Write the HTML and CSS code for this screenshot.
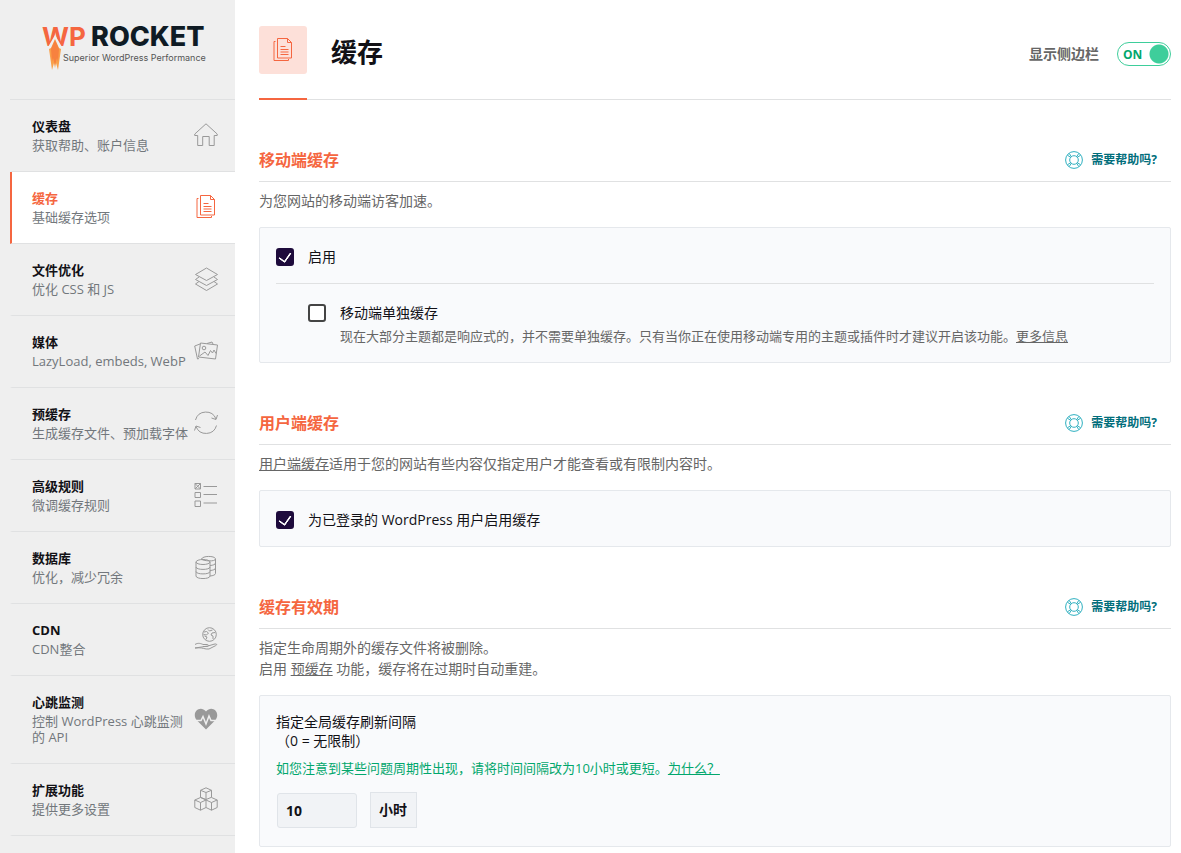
FILE: index.html
```html
<!DOCTYPE html>
<html lang="zh-CN">
<head>
<meta charset="utf-8">
<meta name="viewport" content="width=device-width, initial-scale=1">
<title>WP Rocket</title>
<link rel="stylesheet" href="styles.css">
</head>
<body>
<svg class="sprite" aria-hidden="true">
  <symbol id="docs" viewBox="0 0 24 24">
    <path d="M6.500 .5h10l4 4v15.500h-14zM16.500 .5v4h4M4.500 3.500h-1.500v19h14.500v-1.500M9.500 8.500h5M9.500 11.500h8M9.500 14h8M9.500 16.500h8"/>
  </symbol>
  <symbol id="ring" viewBox="0 0 18 18">
    <circle cx="9" cy="9" r="8.400"/><circle cx="9" cy="9" r="4.300"/>
    <path d="M2.500 4.300l3.200 2M4.300 2.500l2 3.200M15.500 4.300l-3.200 2M13.700 2.500l-2 3.200M2.500 13.700l3.200-2M4.300 15.500l2-3.200M15.500 13.700l-3.200-2M13.700 15.500l-2-3.200"/>
  </symbol>
</svg>
<div class="app">
  <aside class="sidebar">
    <svg class="logo" viewBox="0 0 184 60" role="img" aria-label="WP Rocket">
      <text class="logo-wp" x="10" y="34">WP</text>
      <text class="logo-name" x="59" y="34">ROCKET</text>
      <path class="flame-gap" d="M16 35l7-12 7 12v2H16z"/>
      <path class="flame" d="M17 37l2-1 4-9 4 9 2 1-3 21-2-7-1 5-1-5-2 7z"/>
      <path class="flame-core" d="M19 37l4-9 4 9-1 13-1-4-2 7-2-7-1 4z"/>
      <text class="logo-tag" x="31" y="49">Superior WordPress Performance</text>
    </svg>
    <nav class="nav">
      <a class="nav-item" href="#dashboard"><span class="nav-text"><span class="nav-title">仪表盘</span><span class="nav-sub">获取帮助、账户信息</span></span>
        <svg class="icon" viewBox="0 0 24 24"><path d="M.8 11L12 .8 23.200 11v1.500h-3V22.500h-5v-9h-6.500v9h-5v-10h-3z"/></svg></a>
      <a class="nav-item active" href="#cache" aria-current="page"><span class="nav-text"><span class="nav-title">缓存</span><span class="nav-sub">基础缓存选项</span></span>
        <svg class="icon"><use href="#docs"/></svg></a>
      <a class="nav-item" href="#files"><span class="nav-text"><span class="nav-title">文件优化</span><span class="nav-sub">优化 CSS 和 JS</span></span>
        <svg class="icon" viewBox="0 0 24 24"><path d="M12.500 1l11 6.500-11 6-11-6zM5 10l-3.500 2.500 11 6 11-6L20 10M5 14.500l-3.500 2.500 11 6.500 11-6.500-3.500-2.500"/></svg></a>
      <a class="nav-item" href="#media"><span class="nav-text"><span class="nav-title">媒体</span><span class="nav-sub">LazyLoad, embeds, WebP</span></span>
        <svg class="icon" viewBox="0 0 24 24"><path d="M6.500 4l17 2-2 14-17-2zM5 19.500l-1.500.5L.7 7 6 5M13 4.500l5-1.500 1 2M5.500 17l5.500-4 3 3.500 2.500-5 2 2.500 1.500-3 2 3.500"/><circle cx="10" cy="9" r="1.800"/></svg></a>
      <a class="nav-item" href="#preload"><span class="nav-text"><span class="nav-title">预缓存</span><span class="nav-sub">生成缓存文件、预加载字体</span></span>
        <svg class="icon" viewBox="0 0 24 24"><path d="M1.500 9A10.800 10.800 0 0 1 22 8M23.500 4L22 8.500 17.500 7M22.500 14.500A10.800 10.800 0 0 1 2 15.500M.5 19.500L2 15 6.500 16.500"/></svg></a>
      <a class="nav-item" href="#rules"><span class="nav-text"><span class="nav-title">高级规则</span><span class="nav-sub">微调缓存规则</span></span>
        <svg class="icon" viewBox="0 0 24 24"><path d="M1 .5h5.500v5.500H1zM1 .5l5.500 5.500M6.500.5L1 6M1 9.500h5.500v5H1zM1 18h5.500v5.500H1zM9.500 3.500h13.500M9.500 11.500h13.500M9.500 20h13.500"/></svg></a>
      <a class="nav-item" href="#database"><span class="nav-text"><span class="nav-title">数据库</span><span class="nav-sub">优化，减少冗余</span></span>
        <svg class="icon" viewBox="0 0 24 24"><ellipse cx="9" cy="7" rx="7" ry="2.500"/><path d="M2 7v14c0 3.400 14 3.400 14 0V7M2 12c0 3.200 14 3.200 14 0M2 16.500c0 3.200 14 3.200 14 0M7.500 4.500c0-4 14-4 14-.5v14.500c0 1.300-2.500 2.300-5.500 2.500M7.500 4c1 2 14 3 14 0M16 10.500c3-.2 5.500-1 5.500-2.500M16 15.500c3-.2 5.500-1 5.500-2.500"/></svg></a>
      <a class="nav-item" href="#cdn"><span class="nav-text"><span class="nav-title">CDN</span><span class="nav-sub">CDN整合</span></span>
        <svg class="icon" viewBox="0 0 24 24"><circle cx="15.500" cy="7.500" r="6.800"/><path d="M10 5l2.500-.5 2 1.500-2 2-3-.500M14 2.500l1.500 1.500 3-1M21 5.500l-3 .5-1 2 2 1v3M12 12.500l1-2.500-2.500-1M1 17.500c3-2 6-1 8 0h4c2 0 2 1.800 0 2H9M14 19l6-1.800c3-.7 3.500.5 1.500 1.500L15 22c-4 .5-7-1.500-10-1.200L1 21z"/></svg></a>
      <a class="nav-item" href="#heartbeat"><span class="nav-text"><span class="nav-title">心跳监测</span><span class="nav-sub">控制 WordPress 心跳监测的 API</span></span>
        <svg class="icon" viewBox="0 0 24 24"><path class="heart" d="M12 22.500L2.500 13C-3 5.500 6-2.500 12 4.500 18-2.500 27 5.500 21.500 13z"/><path class="pulse" d="M2 13.500h5l2-4 3 7.500 3-8 2 4.500h5"/></svg></a>
      <a class="nav-item" href="#addons"><span class="nav-text"><span class="nav-title">扩展功能</span><span class="nav-sub">提供更多设置</span></span>
        <svg class="icon" viewBox="0 0 24 24"><path d="M12 .8l5.500 2.500v7L12 12.500 6.500 10.300v-7zM6.500 3.300L12 5.500l5.500-2.200M12 5.500v7M6.500 10.500L12 13v7.500l-5.500 2.700L.8 20.500V13zM.8 13l5.700 2.500L12 13M6.500 15.500v7.700M17.500 10.500l5.700 2.500v7.500l-5.700 2.700L12 20.500M12 13l5.500 2.500 5.700-2.500M17.500 15.500v7.700"/></svg></a>
    </nav>
  </aside>

  <main class="main">
    <header class="page-head">
      <span class="page-icon"><svg class="icon"><use href="#docs"/></svg></span>
      <h1>缓存</h1>
      <label class="switch">
        <span class="switch-label">显示侧边栏</span>
        <span class="switch-box"><input type="checkbox" role="switch" checked><span class="switch-state">ON</span></span>
      </label>
    </header>

    <section>
      <div class="section-head"><h2>移动端缓存</h2><button class="help" type="button"><svg class="ring"><use href="#ring"/></svg>需要帮助吗?</button></div>
      <p class="desc">为您网站的移动端访客加速。</p>
      <div class="card">
        <div class="option"><input class="check" type="checkbox" id="mobile" checked><label for="mobile">启用</label></div>
        <div class="option nested">
          <input class="check" type="checkbox" id="separate"><label for="separate">移动端单独缓存</label>
          <p class="hint">现在大部分主题都是响应式的，并不需要单独缓存。只有当你正在使用移动端专用的主题或插件时才建议开启该功能。<a href="#more">更多信息</a></p>
        </div>
      </div>
    </section>

    <section>
      <div class="section-head"><h2>用户端缓存</h2><button class="help" type="button"><svg class="ring"><use href="#ring"/></svg>需要帮助吗?</button></div>
      <p class="desc"><a href="#user-cache">用户端缓存</a>适用于您的网站有些内容仅指定用户才能查看或有限制内容时。</p>
      <div class="card">
        <div class="option"><input class="check" type="checkbox" id="user" checked><label for="user">为已登录的 WordPress 用户启用缓存</label></div>
      </div>
    </section>

    <section>
      <div class="section-head"><h2>缓存有效期</h2><button class="help" type="button"><svg class="ring"><use href="#ring"/></svg>需要帮助吗?</button></div>
      <p class="desc">指定生命周期外的缓存文件将被删除。<br>启用 <a href="#preload">预缓存</a> 功能，缓存将在过期时自动重建。</p>
      <div class="card lifespan">
        <label class="lifespan-label" for="hours">指定全局缓存刷新间隔<br>（0 = 无限制）</label>
        <p class="tip">如您注意到某些问题周期性出现，请将时间间隔改为10小时或更短。<a href="#why">为什么？</a></p>
        <div class="fields">
          <input class="number" type="text" inputmode="numeric" id="hours" value="10">
          <select class="unit" aria-label="单位"><option>小时</option></select>
        </div>
      </div>
    </section>
  </main>
</div>
</body>
</html>
```
FILE: styles.css
```css
* { box-sizing: border-box; }

body {
  margin: 0;
  background: #fff;
  color: #121116;
  font-family: "Open Sans", "Noto Sans CJK SC", sans-serif;
  font-size: 14px;
  line-height: 18px;
}

h1, h2, p { margin: 0; }
a { color: inherit; }
button, input, select { font: inherit; color: inherit; }
svg { fill: none; stroke: currentColor; }

.sprite { display: none; }
.icon { flex: none; width: 24px; height: 24px; stroke-width: 1; }

.app { display: flex; min-height: 100vh; }

/* Sidebar */
.sidebar { flex: none; width: 235px; padding: 12px 0 0 10px; background: #efefef; }
.logo { display: block; width: 184px; height: 60px; margin: 0 0 27px 22px; stroke: none; }
.logo-wp { font: 700 26px Inter, sans-serif; fill: #f56640; }
.logo-name { font: 800 27px Inter, sans-serif; fill: #0f1b24; }
.logo-tag { font: 400 9px Inter, sans-serif; fill: #555; }
.flame-gap { fill: #efefef; }
.flame { fill: #f9a04a; }
.flame-core { fill: #f7813f; }

.nav { border-top: 1px solid #e0e1e2; }
.nav-item {
  display: flex;
  align-items: center;
  gap: 4px;
  padding: 17px 17px 18px 20px;
  border-bottom: 1px solid #e0e1e2;
  border-left: 2px solid transparent;
  color: #999;
  text-decoration: none;
}
.nav-item.active { background: #fff; border-left-color: #f56640; color: #f56640; }
.nav-text { flex: 1; min-width: 0; }
.nav-title { display: block; margin-bottom: 2px; font-size: 13px; font-weight: 700; color: #121116; }
.active .nav-title { color: #f56640; }
.nav-sub { display: block; font-size: 13px; line-height: 16px; color: #72777c; }
.heart { fill: #999; stroke: none; }
.pulse { stroke: #efefef; stroke-width: 1.5; }

/* Main column */
.main { flex: 1; min-width: 0; padding: 26px 10px 6px 24px; }
.page-head { display: flex; align-items: flex-start; border-bottom: 1px solid #e0e1e2; }
.page-icon {
  position: relative;
  display: grid;
  place-items: center;
  width: 48px;
  height: 48px;
  margin-bottom: 25px;
  border-radius: 3px;
  background: #fde0d9;
  color: #f56640;
}
.page-icon::after {
  content: "";
  position: absolute;
  left: 0;
  right: 0;
  bottom: -26px;
  height: 2px;
  background: #f56640;
}
h1 { margin-left: 24px; font-size: 26px; line-height: 52px; font-weight: 700; }
.switch { display: flex; align-items: center; gap: 18px; margin: 16px 0 0 auto; }
.switch-label { font-weight: 700; color: #666; }
.switch-box { position: relative; display: block; width: 54px; height: 24px; }
.switch-box input {
  appearance: none;
  display: block;
  width: 100%;
  height: 100%;
  margin: 0;
  border: 1px solid #3ece9b;
  border-radius: 12px;
  background: radial-gradient(circle at 41px 11px, #3ece9b 9px, #fff 10px);
}
.switch-state { position: absolute; left: 6px; top: 4px; font-size: 12px; font-weight: 700; color: #02a76d; }

section { margin-top: 48px; }
.section-head { display: flex; align-items: center; justify-content: space-between; padding-bottom: 9px; border-bottom: 1px solid #e0e1e2; }
h2 { font-size: 16px; line-height: 24px; font-weight: 700; color: #f56640; }
.help {
  display: flex;
  align-items: center;
  gap: 8px;
  padding: 0 14px 0 0;
  border: 0;
  background: none;
  font-size: 12px;
  font-weight: 700;
  color: #016e7b;
}
.ring { width: 18px; height: 18px; color: #2fb0c0; }
.desc { margin: 8px 0 16px; line-height: 21px; color: #666; }

.card { padding: 0 16px; border: 1px solid #e5e8ec; border-radius: 2px; background: #f9fafc; }
.option { display: grid; grid-template-columns: 18px 1fr; column-gap: 14px; padding: 20px 0 17px; }
.option + .option { border-top: 1px solid #e0e1e2; }
.nested { padding: 20px 0 16px 32px; }
.check { appearance: none; width: 18px; height: 18px; margin: 0; border: 2px solid #444; border-radius: 3px; background: #fff; }
.check:checked { display: grid; place-items: center; border-color: #1e0b3c; background: #1e0b3c; }
.check:checked::after {
  content: "";
  width: 6px;
  height: 10px;
  margin-bottom: 2px;
  border: solid #fff;
  border-width: 0 2px 2px 0;
  border-radius: 1px;
  rotate: 35deg;
}
.hint { grid-column: 2; margin-top: 4px; font-size: 13px; line-height: 20px; color: #666; }

.lifespan { padding: 16px 16px 18px; }
.lifespan-label { display: block; line-height: 19px; }
.tip { margin: 8px 0 14px; font-size: 13px; line-height: 20px; color: #02a76d; }
.fields { display: flex; align-items: flex-end; gap: 13px; padding-left: 1px; }
.number, .unit { border: 1px solid #e0e4e9; background: #f1f3f6; font-weight: 700; }
.number { width: 80px; height: 35px; padding: 0 8px; border-radius: 3px; }
.unit { appearance: none; height: 36px; padding: 0 9px 0 8px; border-radius: 0; }
```
